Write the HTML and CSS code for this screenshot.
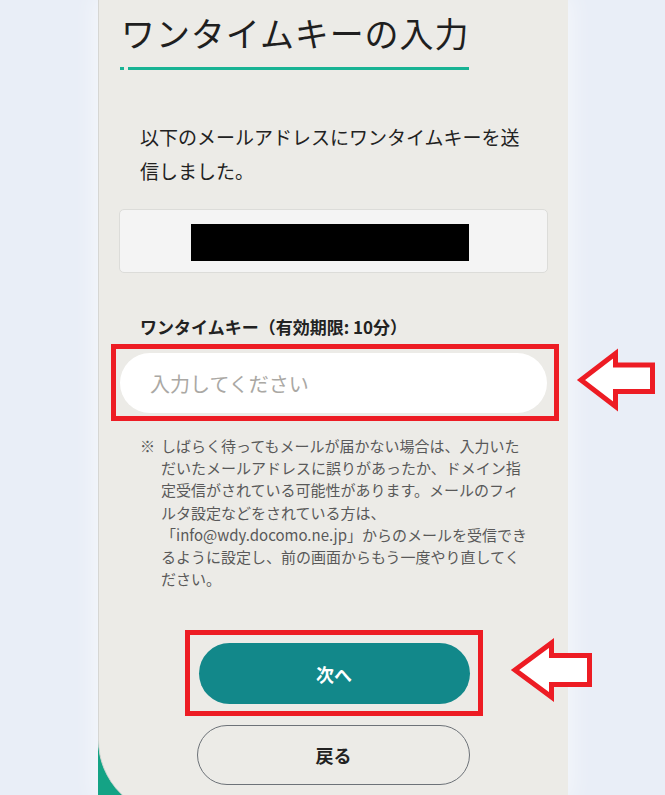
FILE: index.html
```html
<!DOCTYPE html>
<html lang="ja">
<head>
<meta charset="utf-8">
<title>ワンタイムキーの入力</title>
<link rel="stylesheet" href="styles.css">
</head>
<body>
<div class="stage">
  <main class="card">
    <h1 class="title">ワンタイムキーの入力</h1>
    <p class="lead">以下のメールアドレスにワンタイムキーを送信しました。</p>
    <div class="email-box"><span class="redact"></span></div>
    <label class="field-label" for="otp">ワンタイムキー（有効期限: 10分）</label>
    <div class="mark mark-input">
      <input id="otp" class="otp-input" type="text" placeholder="入力してください">
      <svg class="arrow arrow-1" width="90" height="80" viewBox="0 0 90 80"><polygon points="11,40 45.5,13.5 45.5,25 82.5,25 82.5,51.5 45.5,51.5 45.5,66.5"/></svg>
    </div>
    <div class="note">
      <span class="note-mark">※</span>
      <p class="note-text">しばらく待ってもメールが届かない場合は、入力いただいたメールアドレスに誤りがあったか、ドメイン指定受信がされている可能性があります。メールのフィルタ設定などをされている方は、<br>「info@wdy.docomo.ne.jp」からのメールを受信できるように設定し、前の画面からもう一度やり直してください。</p>
    </div>
    <div class="mark mark-next">
      <button class="btn btn-primary" type="button">次へ</button>
      <svg class="arrow arrow-2" width="95" height="80" viewBox="0 0 95 80"><polygon points="10,39 46.5,12 46.5,24.5 84.5,24.5 84.5,53.5 46.5,53.5 46.5,66"/></svg>
    </div>
    <button class="btn btn-back" type="button">戻る</button>
  </main>
</div>
</body>
</html>
```
FILE: styles.css
```css
html, body {
  margin: 0;
  height: 100%;
  overflow: hidden;
}
body {
  background: #e9eef7;
  font-family: "Noto Sans CJK JP", "Noto Sans", sans-serif;
  color: #222;
}
.stage {
  position: relative;
  margin-left: 98px;
  width: 470px;
  height: 795px;
  background: #14a385;
  box-shadow: 0 0 22px 4px rgba(255, 255, 255, 0.55);
}
.card {
  display: flex;
  flex-direction: column;
  align-items: flex-start;
  box-sizing: border-box;
  height: 815px;
  padding-top: 9px;
  background: #ecebe7;
  border-left: 1px solid #d6d6d3;
  border-bottom-left-radius: 75px;
}
.title {
  margin: 0 0 0 21px;
  padding: 0 0 13px 1px;
  font-size: 34px;
  font-weight: 400;
  line-height: 48px;
  letter-spacing: 0.9px;
  color: #1f1f1f;
  background: linear-gradient(to right, #18b394 0 4px, transparent 4px 8px, #18b394 8px) left bottom / 100% 3px no-repeat;
}
.lead {
  margin: 50px 0 0 41px;
  width: 388px;
  font-size: 19px;
  line-height: 34px;
  color: #222;
}
.email-box {
  display: flex;
  align-items: flex-start;
  box-sizing: border-box;
  margin: 21px 0 0 20px;
  width: 429px;
  height: 64px;
  padding: 14px 0 0 71px;
  background: #f4f4f4;
  border: 1px solid #dcdcd9;
  border-radius: 5px;
}
.redact {
  display: block;
  width: 278px;
  height: 37px;
  background: #000;
}
.field-label {
  margin: 42px 0 0 41px;
  font-size: 17px;
  font-weight: 700;
  line-height: 24px;
  color: #222;
}
.mark {
  position: relative;
  box-sizing: border-box;
  border: 5px solid #ed1c24;
}
.mark-input {
  margin: 5px 0 0 12px;
  width: 448px;
  padding: 4px 7px 3px 4px;
}
.otp-input {
  display: block;
  box-sizing: border-box;
  width: 427px;
  height: 60px;
  padding: 0 0 0 30px;
  border: none;
  border-radius: 30px;
  background: #fff;
  font-family: inherit;
  font-size: 20px;
  color: #222;
  outline: none;
}
.otp-input::placeholder {
  color: #aaa8a4;
}
.arrow {
  position: absolute;
}
.arrow polygon {
  fill: #fff;
  stroke: #ed1c24;
  stroke-width: 5;
  stroke-linejoin: miter;
}
.arrow-1 {
  left: calc(100% + 16px);
  top: -9px;
}
.arrow-2 {
  left: calc(100% + 27px);
  top: -4px;
}
.note {
  display: flex;
  margin: 14px 0 0 41px;
  width: 389px;
  font-size: 15px;
  line-height: 22.2px;
  color: #595959;
}
.note-mark {
  flex: 0 0 21px;
}
.note-text {
  margin: 0;
}
.mark-next {
  align-self: center;
  margin-top: 40px;
  width: 298px;
  padding: 8px 8px 7px 9px;
}
.btn {
  display: block;
  box-sizing: border-box;
  font-family: inherit;
  font-size: 18px;
  font-weight: 700;
  cursor: pointer;
}
.btn-primary {
  width: 271px;
  height: 61px;
  border: none;
  border-radius: 31px;
  background: #12888a;
  color: #fff;
}
.btn-back {
  align-self: center;
  margin-top: 9px;
  width: 273px;
  height: 60px;
  border: 1px solid #6d7278;
  border-radius: 30px;
  background: transparent;
  color: #222;
}
```
